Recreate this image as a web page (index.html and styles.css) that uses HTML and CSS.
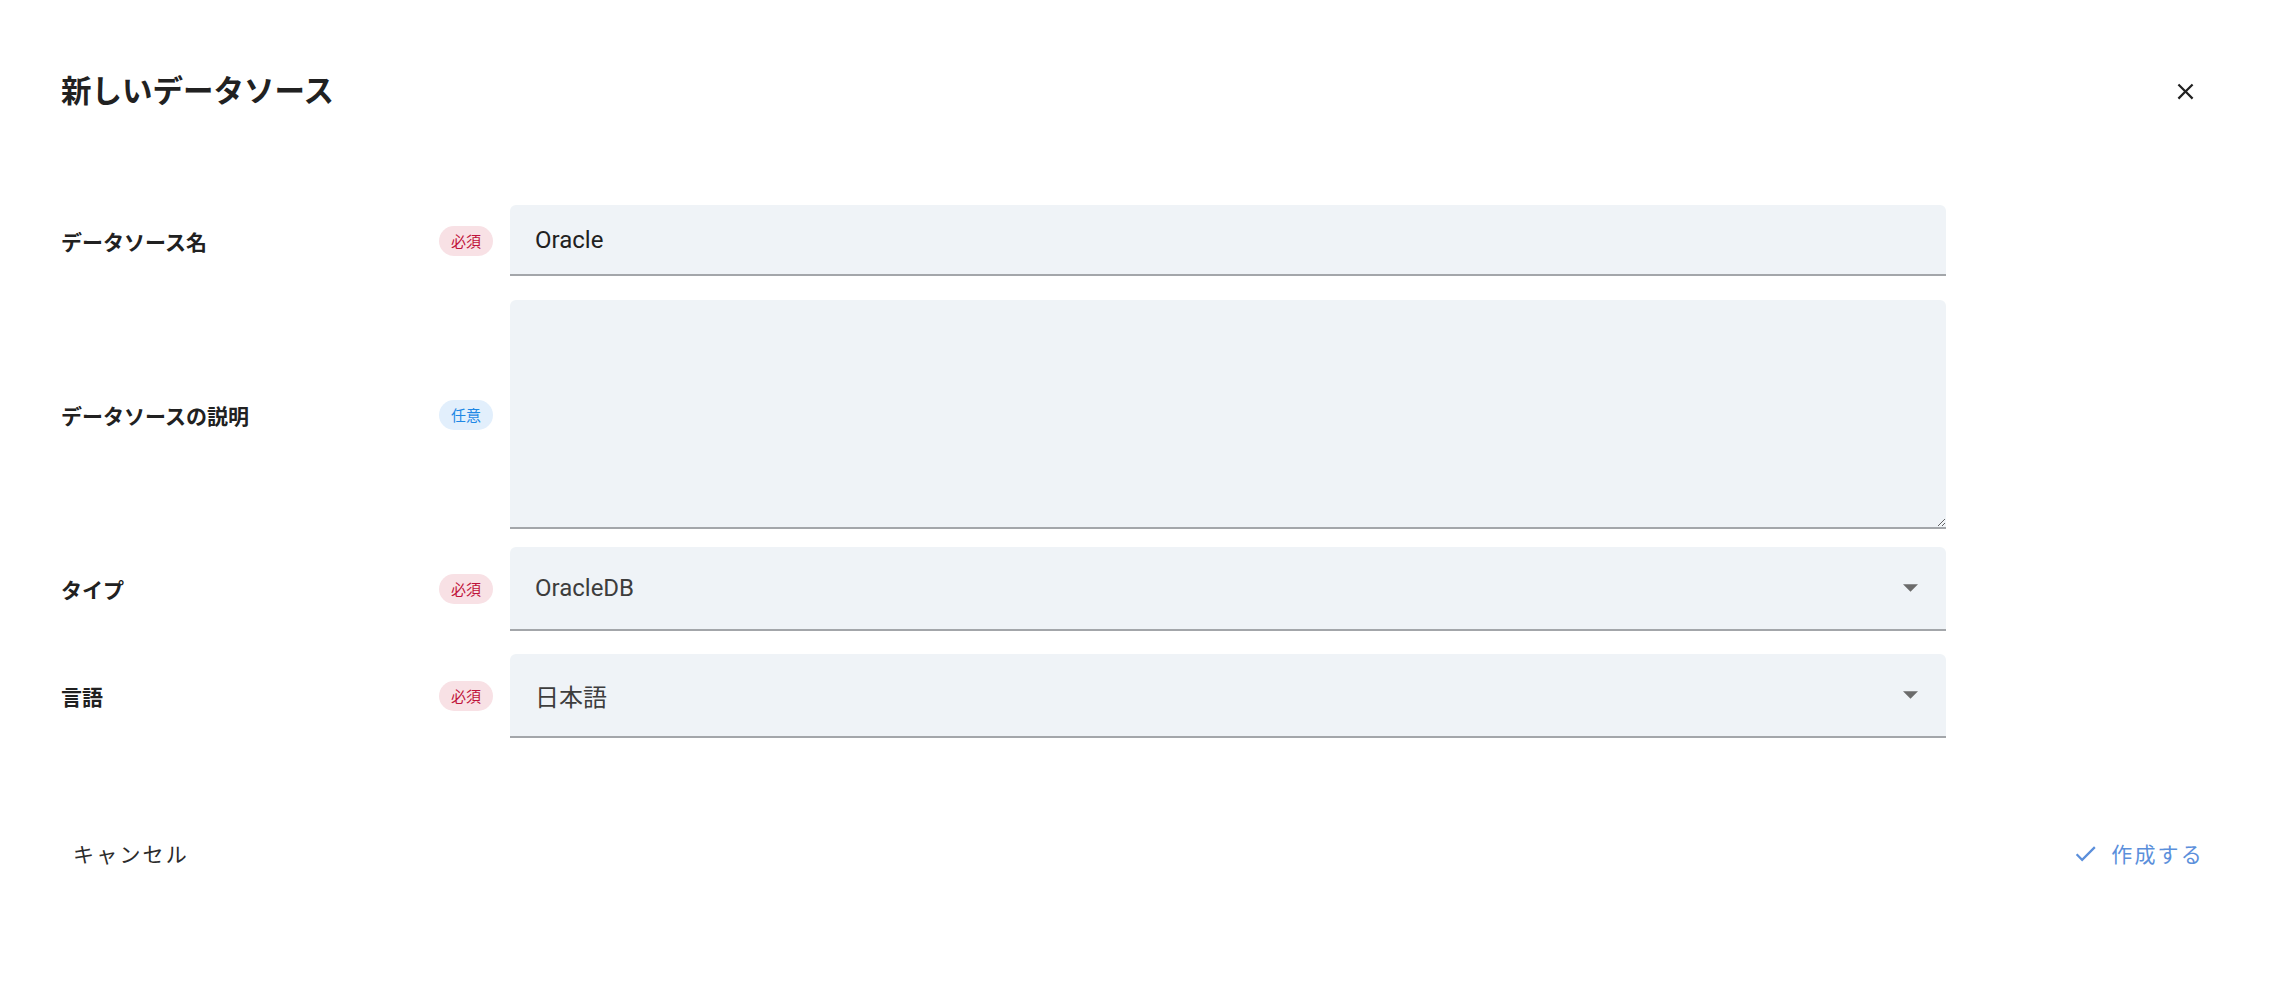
FILE: index.html
```html
<!DOCTYPE html>
<html>
<head>
    <title>新しいデータソース</title>
    <link rel="stylesheet" href="styles.css">
</head>
<body>
    <div class="dialog">
        <div class="dialog-header">
            <h2 class="dialog-title">新しいデータソース</h2>
            <button class="icon-btn" type="button" aria-label="閉じる">
                <svg viewBox="0 0 24 24" width="27" height="27"><path d="M19 6.41L17.59 5 12 10.59 6.41 5 5 6.41 10.59 12 5 17.59 6.41 19 12 13.41 17.59 19 19 17.59 13.41 12z"/></svg>
            </button>
        </div>

        <form class="form" id="datasourceForm">
            <div class="form-row row-name">
                <label class="form-label" for="name">データソース名</label>
                <span class="badge badge-required">必須</span>
                <input class="field" type="text" id="name" name="name" value="Oracle">
            </div>

            <div class="form-row row-desc">
                <label class="form-label" for="description">データソースの説明</label>
                <span class="badge badge-optional">任意</span>
                <textarea class="field field-area" id="description" name="description"></textarea>
            </div>

            <div class="form-row row-select">
                <label class="form-label">タイプ</label>
                <span class="badge badge-required">必須</span>
                <div class="field field-select">
                    <span class="select-value">OracleDB</span>
                    <svg class="select-arrow" viewBox="0 0 10 5" width="15" height="8"><path d="M0 0l5 5 5-5z"/></svg>
                </div>
            </div>

            <div class="form-row row-select">
                <label class="form-label">言語</label>
                <span class="badge badge-required">必須</span>
                <div class="field field-select">
                    <span class="select-value">日本語</span>
                    <svg class="select-arrow" viewBox="0 0 10 5" width="15" height="8"><path d="M0 0l5 5 5-5z"/></svg>
                </div>
            </div>
        </form>

        <div class="dialog-actions">
            <button class="btn" type="button">キャンセル</button>
            <button class="btn btn-primary" type="submit" form="datasourceForm">
                <svg viewBox="0 0 24 24" width="27" height="27"><path d="M9 16.17L4.83 12l-1.42 1.41L9 19 21 7l-1.41-1.41z"/></svg>
                作成する
            </button>
        </div>
    </div>
</body>
</html>
```

FILE: styles.css
```css
body {
    margin: 0;
    background: #fff;
    font-family: Roboto, "Noto Sans CJK JP", sans-serif;
    color: #212121;
}
.dialog {
    padding: 60px 71px 0 61px;
}
.dialog-header {
    display: flex;
    align-items: center;
    justify-content: space-between;
    height: 60px;
}
.dialog-title {
    margin: -2px 0 0;
    font-size: 30.5px;
    font-weight: 700;
    font-family: "Noto Sans CJK JP", sans-serif;
    color: #212121;
}
.icon-btn {
    width: 48px;
    height: 48px;
    margin-top: 2px;
    border: none;
    background: none;
    padding: 0;
    display: flex;
    align-items: center;
    justify-content: center;
    cursor: pointer;
}
.icon-btn svg {
    fill: #212121;
}
.form {
    margin-top: 85px;
}
.form-row {
    display: flex;
    align-items: center;
}
.row-name {
    margin-bottom: 24px;
}
.row-desc {
    margin-bottom: 18px;
}
.row-select {
    margin-bottom: 23px;
}
.form-label {
    flex: 0 0 378px;
    font-family: "Noto Sans CJK JP", sans-serif;
    font-size: 21px;
    font-weight: 700;
    color: #212121;
}
.badge {
    flex: 0 0 54px;
    height: 30px;
    line-height: 30px;
    margin-right: 17px;
    border-radius: 15px;
    text-align: center;
    font-family: "Noto Sans CJK JP", sans-serif;
    font-size: 15px;
}
.badge-required {
    background: #f8e1e5;
    color: #c0133a;
}
.badge-optional {
    background: #e2effc;
    color: #1e88e5;
}
.field {
    flex: 0 0 1436px;
    box-sizing: border-box;
    margin: 0;
    height: 71px;
    padding: 0 24px 0 25px;
    border: none;
    border-bottom: 2px solid #a3a6aa;
    border-radius: 6px 6px 0 0;
    background: #eff3f7;
    font-family: Roboto, "Noto Sans CJK JP", sans-serif;
    font-size: 24px;
    color: #212121;
    outline: none;
}
.field-area {
    display: block;
    height: 229px;
    resize: vertical;
}
.field-select {
    display: flex;
    align-items: center;
    justify-content: space-between;
    height: 84px;
    padding-right: 28px;
    color: #3d3d3d;
}
.select-arrow {
    fill: #6b6b6b;
}
.dialog-actions {
    display: flex;
    justify-content: space-between;
    align-items: center;
    margin-top: 88px;
    margin-right: -7px;
}
.btn {
    display: flex;
    align-items: center;
    height: 54px;
    padding: 0 12px;
    border: none;
    background: none;
    font-family: "Noto Sans CJK JP", sans-serif;
    font-size: 21px;
    letter-spacing: 2.2px;
    color: #2b2b2b;
    cursor: pointer;
}
.btn svg {
    margin-right: 12px;
}
.btn-primary {
    color: #5b8fdb;
}
.btn-primary svg {
    fill: #5b8fdb;
}
```
